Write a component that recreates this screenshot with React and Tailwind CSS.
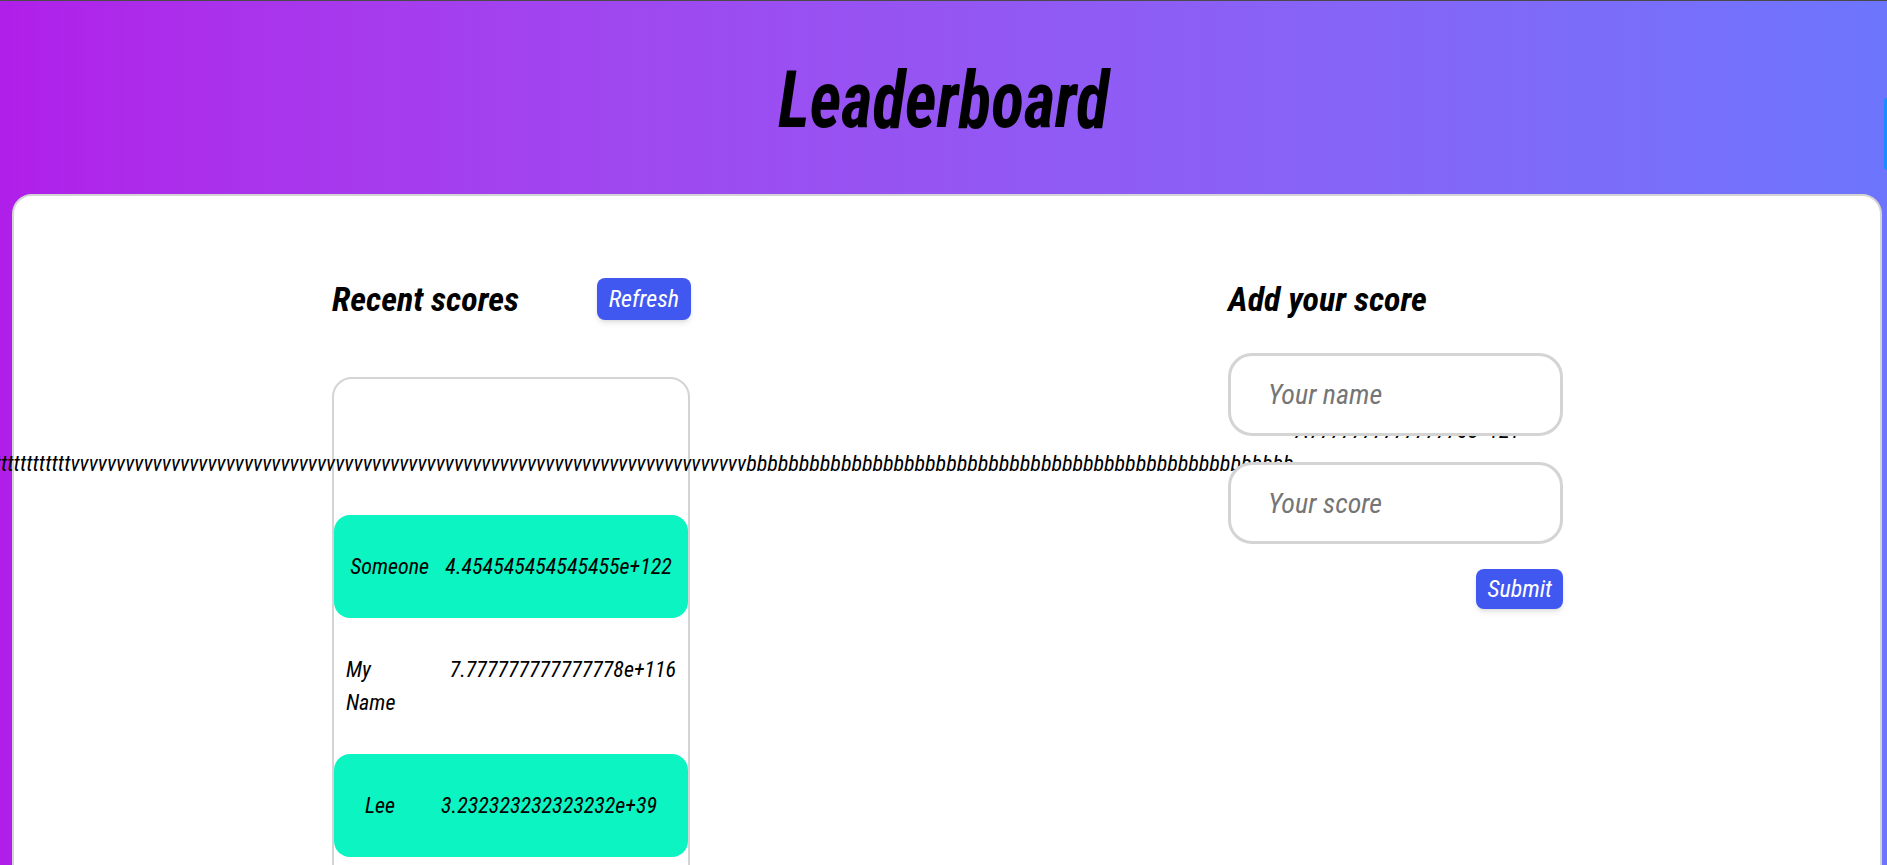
import React from 'react';

// Long entry that someone submitted (one unbroken word)
const LONG_NAME = '\n' + 't'.repeat(90) + 'v'.repeat(74) + 'b'.repeat(52);

const scores = [
  { id: 1, name: LONG_NAME, score: '7.777777777777778e+121', long: true },
  { id: 2, name: 'Someone', score: '4.454545454545455e+122' },
  { id: 3, name: 'My Name', score: '7.777777777777778e+116', wrap: true },
  { id: 4, name: 'Lee', score: '3.232323232323232e+39' },
  { id: 5, name: 'Bob', score: '1.2e+12' },
];

function ScoreRow({ entry, index }) {
  const striped = index % 2 === 1;
  return (
    <li
      className={`flex items-start px-2 py-[35px] leading-[33px] ${entry.long ? 'justify-center' : 'justify-around'} ${
        striped ? 'bg-[#0cf4c1] rounded-2xl' : ''
      }`}
    >
      {entry.wrap ? (
        <span className="w-[96px] shrink-0">
          <span className="inline-block w-min">{entry.name}</span>
        </span>
      ) : (
        <span className="whitespace-pre-line">{entry.name}</span>
      )}
      <span className="whitespace-nowrap">{entry.score}</span>
    </li>
  );
}

function RecentScores() {
  return (
    <section className="w-[359px] flex flex-col">
      <div className="flex items-center justify-between h-[42px]">
        <h2 className="text-[34px] font-bold">Recent scores</h2>
        <button className="bg-[#4158f0] text-white rounded-lg shadow-md text-[24px] leading-[28px] px-3 py-[7px]">
          Refresh
        </button>
      </div>
      <ul className="mt-[57px] w-[358px] border-2 border-[#d4d4d4] rounded-[20px] text-[22px]">
        {scores.map((entry, i) => (
          <ScoreRow key={entry.id} entry={entry} index={i} />
        ))}
      </ul>
    </section>
  );
}

function AddScore() {
  return (
    <section className="w-[335px] flex flex-col">
      <div className="flex items-center h-[42px]">
        <h2 className="text-[34px] font-bold">Add your score</h2>
      </div>
      <input
        type="text"
        placeholder="Your name"
        className="mt-[33px] w-full h-[83px] bg-white border-[3px] border-[#d4d4d4] rounded-[24px] pl-[37px] text-[28px] outline-none placeholder:text-[#757575]"
      />
      <input
        type="text"
        placeholder="Your score"
        className="mt-[26px] w-full h-[82px] bg-white border-[3px] border-[#d4d4d4] rounded-[24px] pl-[37px] text-[28px] outline-none placeholder:text-[#757575]"
      />
      <button className="mt-[25px] self-end bg-[#4158f0] text-white rounded-lg shadow-md text-[24px] leading-[28px] px-[11px] py-[6px]">
        Submit
      </button>
    </section>
  );
}

export default function App() {
  return (
    <div className="relative h-screen overflow-hidden border-t border-[#4a4a4a] bg-linear-to-r from-[#b01ee9] to-[#6d75fd] text-black italic font-stretch-condensed font-['Roboto_Condensed','Roboto',sans-serif]">
      <header className="h-[193px] flex justify-center pt-[59px]">
        <h1 className="text-[80px] leading-none font-bold h-[80px] scale-x-[0.85]">Leaderboard</h1>
      </header>
      <main className="ml-[12px] mr-[5px] min-h-[900px] bg-white border-2 border-[#d4d4d4] rounded-[20px] pt-[82px] pl-[318px] pr-[317px] flex items-start justify-between">
        <RecentScores />
        <AddScore />
      </main>
      <div className="absolute top-[97px] right-0 w-[3px] h-[72px] rounded-l-[3px] bg-[#1a8cff]" />
    </div>
  );
}
